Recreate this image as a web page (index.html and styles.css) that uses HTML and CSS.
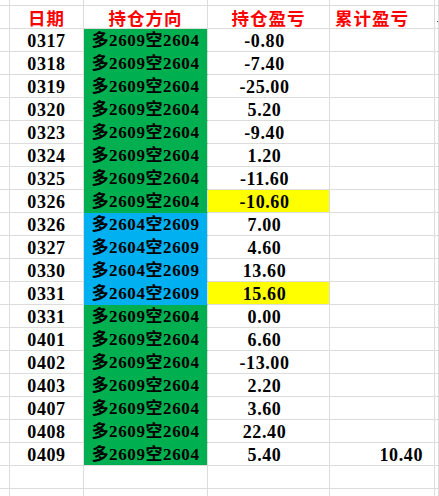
FILE: index.html
```html
<!DOCTYPE html>
<html lang="zh-CN">
<head>
<meta charset="utf-8">
<title>持仓盈亏</title>
<link rel="stylesheet" href="styles.css">
</head>
<body>
<div class="sheet">
  <div class="row top"><div class="c"></div><div class="c"></div><div class="c"></div><div class="c"></div><div class="c"></div><div class="c"></div></div>
  <div class="row head"><div class="c"></div><div class="c">日期</div><div class="c">持仓方向</div><div class="c">持仓盈亏</div><div class="c left">累计盈亏</div><div class="c tick"><span class="dot"></span></div></div>
  <div class="row"><div class="c"></div><div class="c">0317</div><div class="c g">多2609空2604</div><div class="c v">-0.80</div><div class="c"></div><div class="c"></div></div>
  <div class="row"><div class="c"></div><div class="c">0318</div><div class="c g">多2609空2604</div><div class="c v">-7.40</div><div class="c"></div><div class="c"></div></div>
  <div class="row"><div class="c"></div><div class="c">0319</div><div class="c g">多2609空2604</div><div class="c v">-25.00</div><div class="c"></div><div class="c"></div></div>
  <div class="row"><div class="c"></div><div class="c">0320</div><div class="c g">多2609空2604</div><div class="c v">5.20</div><div class="c"></div><div class="c"></div></div>
  <div class="row"><div class="c"></div><div class="c">0323</div><div class="c g">多2609空2604</div><div class="c v">-9.40</div><div class="c"></div><div class="c"></div></div>
  <div class="row"><div class="c"></div><div class="c">0324</div><div class="c g">多2609空2604</div><div class="c v">1.20</div><div class="c"></div><div class="c"></div></div>
  <div class="row"><div class="c"></div><div class="c">0325</div><div class="c g">多2609空2604</div><div class="c v">-11.60</div><div class="c"></div><div class="c"></div></div>
  <div class="row"><div class="c"></div><div class="c">0326</div><div class="c g">多2609空2604</div><div class="c v y">-10.60</div><div class="c"></div><div class="c"></div></div>
  <div class="row"><div class="c"></div><div class="c">0326</div><div class="c b">多2604空2609</div><div class="c v">7.00</div><div class="c"></div><div class="c"></div></div>
  <div class="row"><div class="c"></div><div class="c">0327</div><div class="c b">多2604空2609</div><div class="c v">4.60</div><div class="c"></div><div class="c"></div></div>
  <div class="row"><div class="c"></div><div class="c">0330</div><div class="c b">多2604空2609</div><div class="c v">13.60</div><div class="c"></div><div class="c"></div></div>
  <div class="row"><div class="c"></div><div class="c">0331</div><div class="c b">多2604空2609</div><div class="c v y">15.60</div><div class="c"></div><div class="c"></div></div>
  <div class="row"><div class="c"></div><div class="c">0331</div><div class="c g">多2609空2604</div><div class="c v">0.00</div><div class="c"></div><div class="c"></div></div>
  <div class="row"><div class="c"></div><div class="c">0401</div><div class="c g">多2609空2604</div><div class="c v">6.60</div><div class="c"></div><div class="c"></div></div>
  <div class="row"><div class="c"></div><div class="c">0402</div><div class="c g">多2609空2604</div><div class="c v">-13.00</div><div class="c"></div><div class="c"></div></div>
  <div class="row"><div class="c"></div><div class="c">0403</div><div class="c g">多2609空2604</div><div class="c v">2.20</div><div class="c"></div><div class="c"></div></div>
  <div class="row"><div class="c"></div><div class="c">0407</div><div class="c g">多2609空2604</div><div class="c v">3.60</div><div class="c"></div><div class="c"></div></div>
  <div class="row"><div class="c"></div><div class="c">0408</div><div class="c g">多2609空2604</div><div class="c v">22.40</div><div class="c"></div><div class="c"></div></div>
  <div class="row"><div class="c"></div><div class="c">0409</div><div class="c g last">多2609空2604</div><div class="c v">5.40</div><div class="c r">10.40</div><div class="c"></div></div>
  <div class="row"><div class="c"></div><div class="c"></div><div class="c"></div><div class="c"></div><div class="c"></div><div class="c"></div></div>
  <div class="row tail"><div class="c"></div><div class="c"></div><div class="c"></div><div class="c"></div><div class="c"></div><div class="c"></div></div>
</div>
</body>
</html>
```
FILE: styles.css
```css
html, body {
  margin: 0;
  padding: 0;
  background: #ffffff;
  overflow: hidden;
}
.sheet {
  width: 439px;
  height: 496px;
  overflow: hidden;
  font-family: "Liberation Serif", "Noto Sans CJK SC", serif;
  font-weight: bold;
  font-size: 18px;
  letter-spacing: 0.6px;
  color: #000;
}
.row {
  display: grid;
  grid-template-columns: 10px 74px 124px 122px 105px 1fr;
  height: 23px;
}
.row.top { height: 6px; }
.row.tail { height: 20px; }
.c {
  box-sizing: border-box;
  border-right: 1px solid #dcdcdc;
  border-bottom: 1px solid #dcdcdc;
  display: flex;
  align-items: center;
  justify-content: center;
  white-space: nowrap;
  line-height: 20px;
  padding-top: 1px;
  min-width: 0;
}
.row.tail .c { border-bottom: none; }
.head .c {
  font-family: "Noto Sans CJK SC", sans-serif;
  font-size: 17.5px;
  letter-spacing: 1px;
  line-height: 20px;
  color: #ff0000;
  padding-top: 2px;
}
.head .c.left {
  justify-content: flex-start;
  padding-left: 5px;
}
.head .c.tick {
  justify-content: flex-start;
  padding-left: 2px;
  padding-top: 9px;
}
.dot {
  display: block;
  width: 2px;
  height: 1px;
  background: #444;
}
.g {
  background: #00b050;
  border-bottom-color: #00b050;
  font-size: 17px;
}
.b {
  background: #00b0f0;
  border-bottom-color: #00b0f0;
  font-size: 17px;
}
.g.last { border-bottom-color: #dcdcdc; }
.v { padding-right: 8px; }
.y { background: #ffff00; }
.r {
  justify-content: flex-end;
  padding-right: 11px;
}
```
